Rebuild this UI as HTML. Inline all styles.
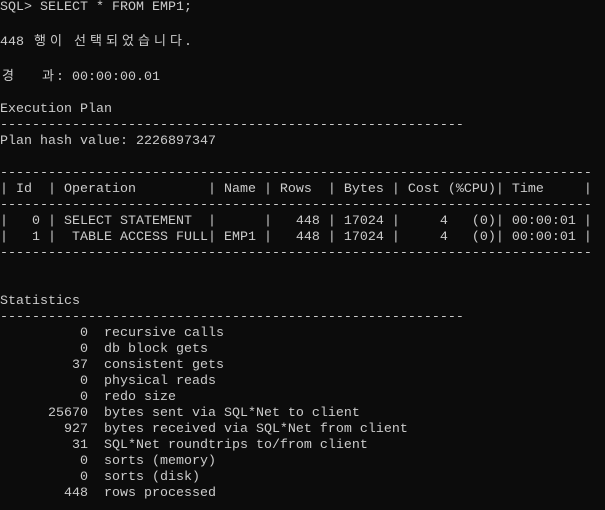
<!DOCTYPE html>
<html><head><meta charset="utf-8"><style>
html,body{margin:0;padding:0;background:#0c0c0c;width:605px;height:510px;overflow:hidden}
pre{margin:0;padding:0;color:#cccccc;font-family:"Liberation Mono","Noto Sans CJK KR",monospace;font-size:13.33px;line-height:16px;letter-spacing:0}
.k{display:inline-block;width:16px;text-align:center;font-family:"Noto Sans CJK KR","NanumGothic",sans-serif;font-size:13px}
</style></head><body><pre>SQL&gt; SELECT * FROM EMP1;

448 <span class="k">행</span><span class="k">이</span> <span class="k">선</span><span class="k">택</span><span class="k">되</span><span class="k">었</span><span class="k">습</span><span class="k">니</span><span class="k">다</span>.

<span class="k">경</span>   <span class="k">과</span>: 00:00:00.01

Execution Plan
----------------------------------------------------------
Plan hash value: 2226897347

--------------------------------------------------------------------------
| Id  | Operation         | Name | Rows  | Bytes | Cost (%CPU)| Time     |
--------------------------------------------------------------------------
|   0 | SELECT STATEMENT  |      |   448 | 17024 |     4   (0)| 00:00:01 |
|   1 |  TABLE ACCESS FULL| EMP1 |   448 | 17024 |     4   (0)| 00:00:01 |
--------------------------------------------------------------------------


Statistics
----------------------------------------------------------
          0  recursive calls
          0  db block gets
         37  consistent gets
          0  physical reads
          0  redo size
      25670  bytes sent via SQL*Net to client
        927  bytes received via SQL*Net from client
         31  SQL*Net roundtrips to/from client
          0  sorts (memory)
          0  sorts (disk)
        448  rows processed
</pre></body></html>
